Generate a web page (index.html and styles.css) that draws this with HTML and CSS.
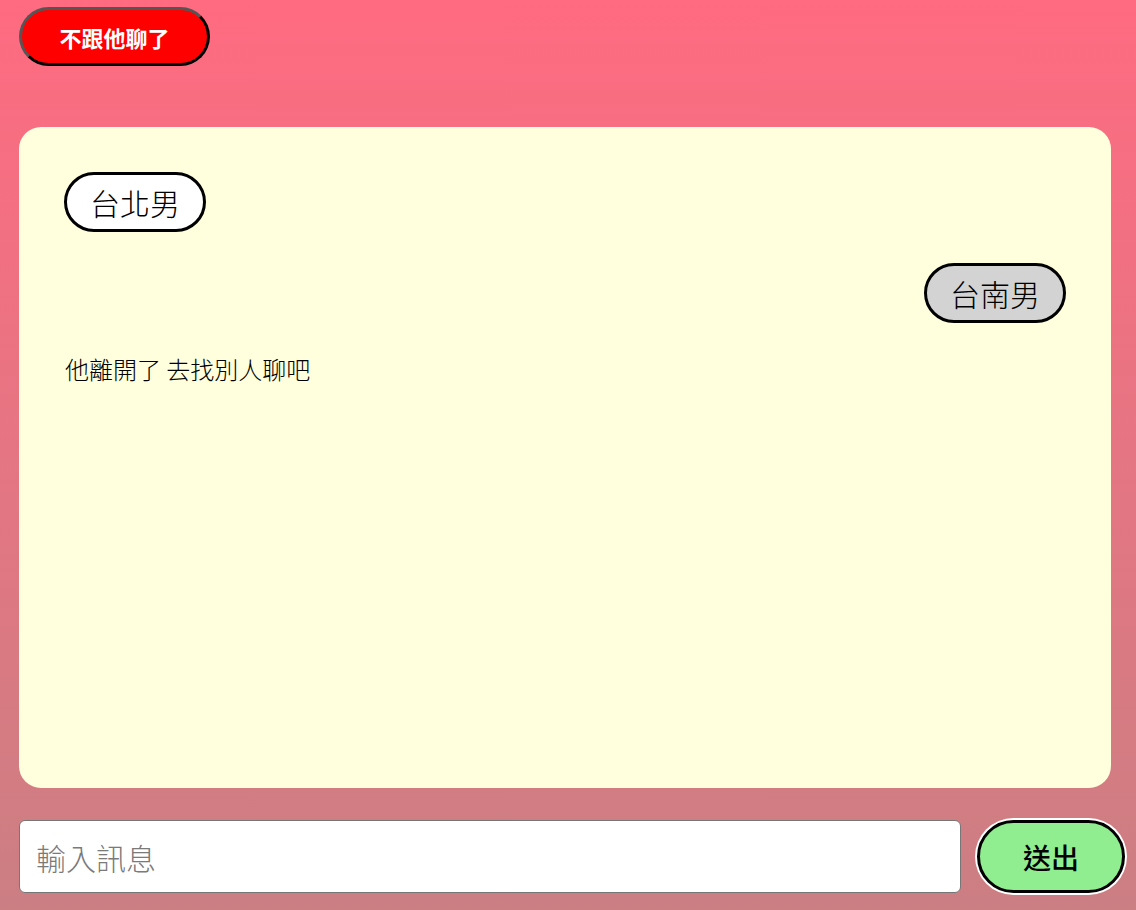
FILE: index.html
```html
<!DOCTYPE html>
<html lang="zh-Hant">
<head>
<meta charset="utf-8">
<title>聊天</title>
<link rel="stylesheet" href="styles.css">
</head>
<body>
<div class="page">
  <button class="quit" type="button">不跟他聊了</button>
  <div class="chat">
    <div class="bubble bubble-me">台北男</div>
    <div class="bubble bubble-other">台南男</div>
    <div class="system">他離開了 去找別人聊吧</div>
  </div>
  <div class="composer">
    <input class="msg-input" type="text" placeholder="輸入訊息">
    <button class="send" type="button">送出</button>
  </div>
</div>
</body>
</html>
```

FILE: styles.css
```css
html, body {
  margin: 0;
  padding: 0;
}
body {
  width: 1136px;
  height: 910px;
  overflow: hidden;
  background: linear-gradient(to bottom, #ff6b81 0%, #cb7f83 100%);
  font-family: "Noto Sans CJK TC", "Noto Sans", sans-serif;
  font-weight: 300;
  color: #000;
}
.page {
  display: flex;
  flex-direction: column;
  align-items: flex-start;
  padding: 7px 0 0 19px;
}
.quit {
  width: 191px;
  height: 59px;
  box-sizing: border-box;
  border: 3px solid;
  border-color: #555 #000 #000 #555;
  border-radius: 30px;
  background: #ff0000;
  color: #fff;
  font-family: "Noto Sans CJK TC", sans-serif;
  font-weight: 700;
  font-size: 22px;
  padding: 0;
  margin: 0 0 61px 0;
}
.chat {
  width: 1092px;
  height: 661px;
  box-sizing: border-box;
  background: #ffffde;
  border-radius: 22px;
  padding: 45px;
  display: flex;
  flex-direction: column;
  gap: 31px;
}
.bubble {
  box-sizing: border-box;
  height: 60px;
  line-height: 54px;
  padding: 0 23px;
  border: 3px solid #000;
  border-radius: 30px;
  font-size: 30px;
}
.bubble-me {
  align-self: flex-start;
  background: #fff;
}
.bubble-other {
  align-self: flex-end;
  background: #d3d3d3;
}
.system {
  font-size: 24px;
  line-height: 30px;
  padding-left: 1px;
}
.composer {
  display: flex;
  align-items: center;
  margin-top: 32px;
}
.msg-input {
  width: 942px;
  height: 73px;
  box-sizing: border-box;
  border: 1px solid #767676;
  border-radius: 6px;
  background: #fff;
  padding: 0 16px;
  font-family: "Noto Sans CJK TC", sans-serif;
  font-weight: 300;
  font-size: 30px;
  margin: 0;
}
.msg-input::placeholder {
  color: #7a7a7a;
}
.send {
  width: 148px;
  height: 73px;
  box-sizing: border-box;
  margin: 0 0 0 16px;
  border: 3px solid #000;
  border-radius: 37px;
  box-shadow: 0 0 0 2px #fff;
  background: #90ee90;
  color: #000;
  font-family: "Noto Sans CJK TC", sans-serif;
  font-weight: 500;
  font-size: 28px;
  padding: 0;
}
```
